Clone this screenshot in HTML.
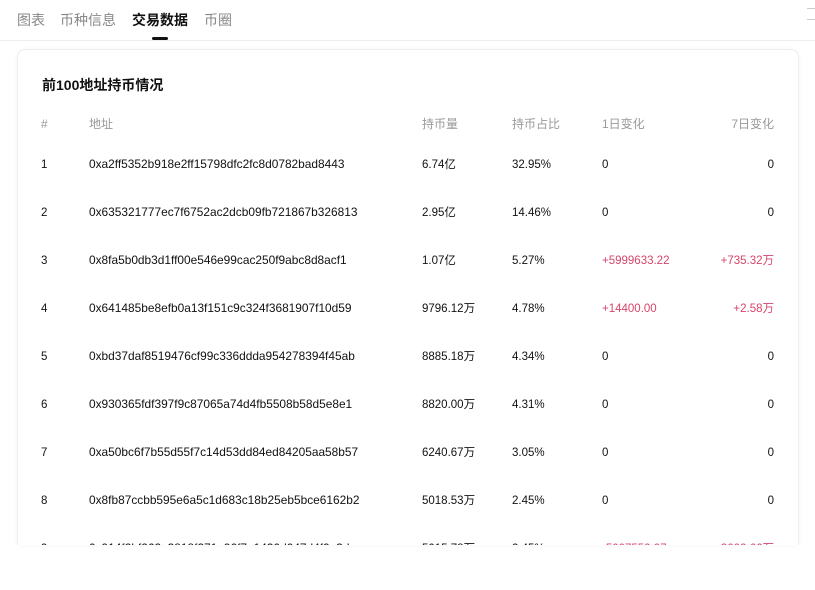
<!DOCTYPE html>
<html><head><meta charset="utf-8"><style>
*{margin:0;padding:0;box-sizing:border-box}
body{width:815px;height:590px;background:#fff;font-family:"Liberation Sans","Noto Sans CJK SC",sans-serif;position:relative;overflow:hidden;color:#111}
.tab{position:absolute;top:10px;font-size:14px;color:#888}
.tab.a{color:#111;font-weight:bold}
.ul{position:absolute;left:152px;top:37px;width:16px;height:3px;background:#111;border-radius:2px}
.div{position:absolute;left:0;top:40px;width:815px;height:1px;background:#eee}
.card{position:absolute;left:17px;top:49px;width:782px;height:496px;border:1px solid #eee;border-bottom:none;border-radius:8px 8px 0 0;overflow:hidden;box-shadow:0 0 6px rgba(0,0,0,0.04)}
.title{position:absolute;left:24px;top:25px;font-size:14px;font-weight:bold}
.r{position:absolute;left:0;width:782px;height:16px;font-size:11.5px;line-height:16px}
.r span{position:absolute;top:0;white-space:nowrap}
.h{color:#999;font-size:12px}
.c1{left:23px}.c3{left:404px}.c4{left:494px}.c5{left:584px}.c6{right:26px;text-align:right}
.r span.c2{left:71px;font-size:11.9px;top:-1px}
.h span.c2{font-size:12px;top:0}
.red{color:#d6456a}
.menu{position:absolute;left:807px;top:8px;width:8px;height:12px;border-top:1px solid #ccc;border-bottom:1px solid #ccc}
</style></head><body>
<div class="tab" style="left:17px">图表</div>
<div class="tab" style="left:60px">币种信息</div>
<div class="tab a" style="left:132px">交易数据</div>
<div class="tab" style="left:204px">币圈</div>
<div class="ul"></div>
<div class="menu"></div>
<div class="div"></div>
<div class="card">
<div class="title">前100地址持币情况</div>
<div class="r h" style="top:66px"><span class="c1">#</span><span class="c2">地址</span><span class="c3">持币量</span><span class="c4">持币占比</span><span class="c5">1日变化</span><span class="c6">7日变化</span></div>
<div class="r" style="top:107px"><span class="c1">1</span><span class="c2">0xa2ff5352b918e2ff15798dfc2fc8d0782bad8443</span><span class="c3">6.74亿</span><span class="c4">32.95%</span><span class="c5">0</span><span class="c6">0</span></div>
<div class="r" style="top:155px"><span class="c1">2</span><span class="c2">0x635321777ec7f6752ac2dcb09fb721867b326813</span><span class="c3">2.95亿</span><span class="c4">14.46%</span><span class="c5">0</span><span class="c6">0</span></div>
<div class="r" style="top:203px"><span class="c1">3</span><span class="c2">0x8fa5b0db3d1ff00e546e99cac250f9abc8d8acf1</span><span class="c3">1.07亿</span><span class="c4">5.27%</span><span class="c5 red">+5999633.22</span><span class="c6 red">+735.32万</span></div>
<div class="r" style="top:251px"><span class="c1">4</span><span class="c2">0x641485be8efb0a13f151c9c324f3681907f10d59</span><span class="c3">9796.12万</span><span class="c4">4.78%</span><span class="c5 red">+14400.00</span><span class="c6 red">+2.58万</span></div>
<div class="r" style="top:299px"><span class="c1">5</span><span class="c2">0xbd37daf8519476cf99c336ddda954278394f45ab</span><span class="c3">8885.18万</span><span class="c4">4.34%</span><span class="c5">0</span><span class="c6">0</span></div>
<div class="r" style="top:347px"><span class="c1">6</span><span class="c2">0x930365fdf397f9c87065a74d4fb5508b58d5e8e1</span><span class="c3">8820.00万</span><span class="c4">4.31%</span><span class="c5">0</span><span class="c6">0</span></div>
<div class="r" style="top:395px"><span class="c1">7</span><span class="c2">0xa50bc6f7b55d55f7c14d53dd84ed84205aa58b57</span><span class="c3">6240.67万</span><span class="c4">3.05%</span><span class="c5">0</span><span class="c6">0</span></div>
<div class="r" style="top:443px"><span class="c1">8</span><span class="c2">0x8fb87ccbb595e6a5c1d683c18b25eb5bce6162b2</span><span class="c3">5018.53万</span><span class="c4">2.45%</span><span class="c5">0</span><span class="c6">0</span></div>
<div class="r" style="top:491px"><span class="c1">9</span><span class="c2">0x914f2bf262e3818f271a96f7e1430d047d4f9e3d</span><span class="c3">5015.78万</span><span class="c4">2.45%</span><span class="c5 red">-5007559.07</span><span class="c6 red">-3002.66万</span></div>
</div>
</body></html>
